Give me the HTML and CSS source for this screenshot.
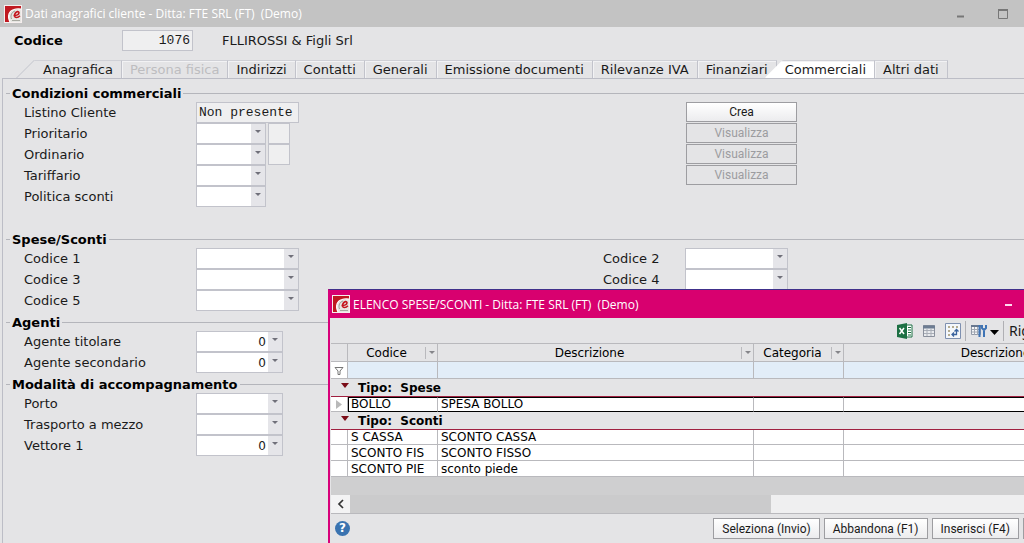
FILE: index.html
```html
<!DOCTYPE html>
<html lang="it">
<head>
<meta charset="utf-8">
<title>Dati anagrafici cliente</title>
<link rel="stylesheet" href="styles.css">
</head>
<body>
<svg class="defs" aria-hidden="true">
  <symbol id="logo" viewBox="0 0 18 18">
    <rect width="18" height="18" fill="#f6eeee"/>
    <rect x="1" y="1" width="16" height="16" fill="#c01820"/>
    <path d="M17 4v13H6C3.500 12 5 7 9 5Q12 3.500 17 4z" fill="#e6e6e2"/>
    <path d="M6 17C3 11 5 6 10 4.500Q13 3.300 17 4" fill="none" stroke="#fff" stroke-width="1.200"/>
    <path d="M7.500 14C6 10 8 7 11 6" fill="none" stroke="#9c9c94"/>
    <path d="M9.500 10.500c3 .2 5.500-1 5.500-2.800 0-1.700-2.700-1.400-3.900.8-1.100 2-.6 4 1.200 4 1.500 0 2.700-.7 3.600-1.800" fill="none" stroke="#c4141c" stroke-width="1.600"/>
    <path d="M8 15.500h8" stroke="#a8a8a0"/>
  </symbol>
</svg>
<main class="window">
  <header class="titlebar">
    <svg class="logo"><use href="#logo"/></svg>
    <h1 class="title">Dati anagrafici cliente - Ditta: FTE SRL (FT)&nbsp; (Demo)</h1>
    <button class="winbtn" aria-label="Riduci a icona"><svg width="12" height="12"><path d="M2 8.500h7" stroke="#777" stroke-width="2"/></svg></button>
    <button class="winbtn" aria-label="Ingrandisci"><svg width="12" height="12"><path d="M1.500 1.500h9v9h-9z" fill="none" stroke="#777"/><path d="M1 2h10" stroke="#777" stroke-width="2"/></svg></button>
  </header>
  <div class="record">
    <label class="record-label" for="codice">Codice</label>
    <input class="field field-code" id="codice" value="1076" readonly>
    <span>FLLIROSSI &amp; Figli Srl</span>
  </div>
  <nav class="tabs" role="tablist">
    <button class="tab tab-first" role="tab">Anagrafica</button>
    <button class="tab" role="tab" disabled>Persona fisica</button>
    <button class="tab" role="tab">Indirizzi</button>
    <button class="tab" role="tab">Contatti</button>
    <button class="tab" role="tab">Generali</button>
    <button class="tab" role="tab">Emissione documenti</button>
    <button class="tab" role="tab">Rilevanze IVA</button>
    <button class="tab" role="tab">Finanziari</button>
    <button class="tab tab-active" role="tab" aria-selected="true">Commerciali</button>
    <button class="tab" role="tab">Altri dati</button>
  </nav>
  <div class="panel">
    <section class="group group-tall">
      <h2 class="legend">Condizioni commerciali</h2>
      <div class="row"><label for="listino">Listino Cliente</label><div class="cell"><input class="field field-wide" id="listino" value="Non presente" readonly></div><button class="btn btn-side">Crea</button></div>
      <div class="row"><label for="prio">Prioritario</label><div class="cell"><span class="combo combo-s"><select id="prio"><option></option></select></span><input class="field field-mini" aria-label="Descrizione prioritario" readonly></div><button class="btn btn-side" disabled>Visualizza</button></div>
      <div class="row"><label for="ordi">Ordinario</label><div class="cell"><span class="combo combo-s"><select id="ordi"><option></option></select></span><input class="field field-mini" aria-label="Descrizione ordinario" readonly></div><button class="btn btn-side" disabled>Visualizza</button></div>
      <div class="row"><label for="tari">Tariffario</label><div class="cell"><span class="combo combo-s"><select id="tari"><option></option></select></span></div><button class="btn btn-side" disabled>Visualizza</button></div>
      <div class="row"><label for="poli">Politica sconti</label><div class="cell"><span class="combo combo-s"><select id="poli"><option></option></select></span></div></div>
    </section>
    <section class="group">
      <h2 class="legend">Spese/Sconti</h2>
      <div class="row"><label for="c1">Codice 1</label><div class="cell"><span class="combo combo-l"><select id="c1"><option></option></select></span></div><div class="pair"><label for="c2">Codice 2</label><span class="combo combo-l"><select id="c2"><option></option></select></span></div></div>
      <div class="row"><label for="c3">Codice 3</label><div class="cell"><span class="combo combo-l"><select id="c3"><option></option></select></span></div><div class="pair"><label for="c4">Codice 4</label><span class="combo combo-l"><select id="c4"><option></option></select></span></div></div>
      <div class="row"><label for="c5">Codice 5</label><div class="cell"><span class="combo combo-l"><select id="c5"><option></option></select></span></div></div>
    </section>
    <section class="group">
      <h2 class="legend">Agenti</h2>
      <div class="row"><label for="a1">Agente titolare</label><div class="cell"><span class="combo combo-m"><select id="a1"><option>0</option></select></span></div></div>
      <div class="row"><label for="a2">Agente secondario</label><div class="cell"><span class="combo combo-m"><select id="a2"><option>0</option></select></span></div></div>
    </section>
    <section class="group">
      <h2 class="legend">Modalità di accompagnamento</h2>
      <div class="row"><label for="m1">Porto</label><div class="cell"><span class="combo combo-m"><select id="m1"><option></option></select></span></div></div>
      <div class="row"><label for="m2">Trasporto a mezzo</label><div class="cell"><span class="combo combo-m"><select id="m2"><option></option></select></span></div></div>
      <div class="row"><label for="m3">Vettore 1</label><div class="cell"><span class="combo combo-m"><select id="m3"><option>0</option></select></span></div></div>
    </section>
  </div>
</main>

<section class="dialog" role="dialog" aria-labelledby="dlg-title">
  <header class="dialog-bar">
    <svg class="logo"><use href="#logo"/></svg>
    <h2 class="title" id="dlg-title">ELENCO SPESE/SCONTI - Ditta: FTE SRL (FT)&nbsp; (Demo)</h2>
    <button class="winbtn" aria-label="Riduci a icona"><svg width="12" height="12"><path d="M2 7h7" stroke="#ffd9ee" stroke-width="2"/></svg></button>
  </header>
  <div class="dialog-body">
    <div class="toolbar">
      <button class="tool" aria-label="Esporta in Excel"><svg width="16" height="16"><path d="M8 2h7v12H8z" fill="#fff" stroke="#1d7044"/><path d="M11 4.500h3M11 7h3M11 9.500h3M11 12h3" stroke="#1d7044"/><path d="M0 2l10-2v16L0 14z" fill="#1d7044"/><path d="M2.500 5l4.500 6M7 5l-4.500 6" stroke="#fff" stroke-width="1.500"/></svg></button>
      <button class="tool" aria-label="Griglia"><svg width="16" height="16"><path d="M2.500 2.500h11v11h-11z" fill="#e9ebee" stroke="#8a909c"/><path d="M2 4h12" stroke="#6d7c92" stroke-width="3"/><path d="M3 7.500h10M3 10.500h10M6 6v7M10 6v7" stroke="#a9aeb7"/></svg></button>
      <button class="tool" aria-label="Pivot"><svg width="16" height="16"><path d="M.5.500h15v15H.5z" fill="#f4f7fb" stroke="#7e90b0"/><path d="M3 3h2v2H3zM7 3h2v2H7zM11 3h2v2h-2zM3 7h2v2H3zM3 11h2v2H3z" fill="#b5ad92"/><path d="M7 11.500h4.500V6.500M9 9.500l-2 2 2 2M9.500 8.500l2-2 2 2" fill="none" stroke="#39639f" stroke-width="1.300"/></svg></button>
      <span class="sep"></span>
      <button class="tool tool-menu" aria-label="Personalizza"><svg width="28" height="16"><path d="M.5 2.500h9v9h-9z" fill="#f4f5f7" stroke="#929aa8"/><path d="M0 3h10" stroke="#68788f" stroke-width="2"/><path d="M1 6.500h8M1 9h8M3.500 4v8M6.500 4v8" stroke="#a2a8b2"/><path d="M8.500 2v12M11 2v3l2 2 2-2V2M13 7v7" fill="none" stroke="#3f74b5" stroke-width="2"/><path d="M19 7h9l-4.500 5z" fill="#000"/></svg></button>
      <span class="sep"></span>
      <span class="tool-text">Rig</span>
    </div>
    <div class="grid">
      <table class="table">
        <colgroup><col class="c-mark"><col class="c-short"><col class="c-long"><col class="c-short"><col class="c-long"></colgroup>
        <thead>
          <tr class="head"><th></th><th><span class="th">Codice</span></th><th><span class="th">Descrizione</span></th><th><span class="th">Categoria</span></th><th><span class="th">Descrizione</span></th></tr>
          <tr class="filter"><td><svg width="10" height="9"><path d="M1 1.500h8L6 5v3.500H4V5z" fill="#fff" stroke="#777"/></svg></td><td></td><td></td><td></td><td></td></tr>
        </thead>
        <tbody>
          <tr class="section"><th colspan="5"><span class="tri"></span>Tipo:&nbsp; Spese</th></tr>
          <tr class="item current"><td><svg width="6" height="9"><path d="M0 0l6 4.500L0 9z" fill="#b9b9b9"/></svg></td><td>BOLLO</td><td>SPESA BOLLO</td><td></td><td></td></tr>
          <tr class="section"><th colspan="5"><span class="tri"></span>Tipo:&nbsp; Sconti</th></tr>
          <tr class="item"><td></td><td>S CASSA</td><td>SCONTO CASSA</td><td></td><td></td></tr>
          <tr class="item"><td></td><td>SCONTO FIS</td><td>SCONTO FISSO</td><td></td><td></td></tr>
          <tr class="item"><td></td><td>SCONTO PIE</td><td>sconto piede</td><td></td><td></td></tr>
        </tbody>
      </table>
    </div>
    <div class="scroll">
      <button class="scroll-btn" aria-label="Scorri a sinistra"><svg width="8" height="10"><path d="M6 1L2 5l4 4" fill="none" stroke="#333" stroke-width="1.700"/></svg></button>
      <span class="thumb"></span>
    </div>
    <footer class="foot">
      <button class="help" aria-label="Aiuto">?</button>
      <div class="actions">
        <button class="btn">Seleziona (Invio)</button>
        <button class="btn">Abbandona (F1)</button>
        <button class="btn">Inserisci (F4)</button>
      </div>
    </footer>
  </div>
</section>
</body>
</html>
```
FILE: styles.css
```css
* { box-sizing: border-box; }

body {
  margin: 0;
  height: 100vh;
  overflow: hidden;
  background: #e4e4e6;
  color: #1a1a1a;
  font-family: "DejaVu Sans", Verdana, sans-serif;
  font-size: 13px;
}

button, input, select { font: inherit; color: inherit; margin: 0; border-radius: 0; }
h1, h2 { margin: 0; }
.defs { position: absolute; width: 0; height: 0; }

.window { display: flex; flex-direction: column; min-height: 100vh; }

.titlebar {
  display: flex;
  align-items: center;
  height: 27px;
  padding: 0 15px 0 4px;
  background: #c3c3c3;
}
.logo { width: 18px; height: 18px; flex: none; }
.title {
  flex: 1;
  margin-left: 3px;
  color: #fff;
  font: 400 12px "Open Sans", "Noto Sans", sans-serif;
  white-space: nowrap;
}
.winbtn { width: 12px; height: 12px; padding: 0; border: 0; background: none; display: flex; }
.winbtn + .winbtn { margin-left: 30px; }

.record { display: flex; align-items: center; height: 33px; padding: 0 14px 6px; }
.record-label { width: 108px; font-weight: 700; color: #000; }
.field {
  height: 21px;
  padding: 0 2px;
  border: 1px solid #c2c3cb;
  background: #efeff0;
  font-family: "Liberation Mono", monospace;
}
.field-code { width: 71px; margin-right: 29px; text-align: right; }
.field-wide { width: 103px; }
.field-mini { width: 22px; margin-left: 2px; }

.tabs { display: flex; height: 18px; padding-left: 35px; }
.tab {
  height: 18px;
  padding: 0 8px;
  border: 0;
  border-top: 1px solid #cfd0d6;
  border-right: 1px solid #c2c3cb;
  box-shadow: inset 1px 1px #f2f2f4;
  background: none;
  line-height: 17px;
  white-space: nowrap;
}
.tab:disabled { color: #bdbdc0; }
.tab-first { position: relative; box-shadow: none; }
.tab-first::before {
  content: "";
  position: absolute;
  right: 100%;
  top: -1px;
  width: 9px;
  height: 18px;
  border-left: 1px solid #c2c3cb;
  transform: skewX(-45deg);
}
.tab-active {
  position: relative;
  margin-left: -12px;
  padding-left: 20px;
  background: #fff;
  clip-path: polygon(0 100%, 18px 0, 100% 0, 100% 100%);
}

.panel {
  flex: 1;
  margin-left: 2px;
  padding: 5px 0 0 3px;
  border: solid #bcbdc6;
  border-width: 1px 0 0 1px;
}
.group { margin-bottom: 2px; }
.group-tall { margin-bottom: 23px; }
.legend {
  display: flex;
  align-items: center;
  gap: 2px;
  height: 18px;
  color: #000;
  font-size: 13px;
  font-weight: 700;
  white-space: nowrap;
}
.legend::before, .legend::after { content: ""; width: 4px; height: 1px; background: #b4b5bb; }
.legend::after { flex: 1; }

.row {
  display: grid;
  grid-template-columns: 172px 1fr 421px;
  align-items: center;
  height: 21px;
  padding-left: 18px;
}
.cell { display: flex; }
.pair { display: grid; grid-template-columns: 82px auto; justify-content: start; align-items: center; }

.combo { position: relative; display: block; height: 21px; }
.combo-s { width: 70px; }
.combo-m { width: 87px; }
.combo-l { width: 103px; }
.combo select {
  appearance: none;
  display: block;
  width: 100%;
  height: 21px;
  padding: 0 16px 0 2px;
  border: 1px solid #c2c3cb;
  background: linear-gradient(90deg, #fff calc(100% - 14px), #e5e5e9 0);
  font-size: 12px;
  text-align-last: right;
}
.combo::after {
  content: "";
  position: absolute;
  right: 5px;
  top: 7px;
  border: solid transparent;
  border-width: 3px 3px 0;
  border-top-color: #70707a;
}

.btn {
  height: 21px;
  padding: 0 8px;
  border: 1px solid #9d9da1;
  background: linear-gradient(#fff, #ececee);
  font-family: Roboto, "Liberation Sans", sans-serif;
  font-size: 12px;
  white-space: nowrap;
}
.btn:disabled { background: none; color: #9c9ca0; }
.btn-side { align-self: start; width: 111px; height: 20px; margin-left: 83px; }

.dialog {
  position: absolute;
  left: 328px;
  top: 289px;
  right: 0;
  bottom: 0;
  display: flex;
  flex-direction: column;
  overflow: hidden;
  border-left: 2px solid #d8007a;
  border-top: 1px solid #40308a;
  background: #e4e4e6;
}
.dialog-bar {
  display: flex;
  align-items: center;
  height: 28px;
  flex: none;
  padding: 0 9px 0 2px;
  background: #d8006f;
}
.dialog-body { flex: 1; display: flex; flex-direction: column; padding-left: 1px; }

.toolbar { display: flex; justify-content: flex-end; align-items: center; height: 25px; flex: none; }
.tool { padding: 0; border: 0; background: none; display: flex; margin-right: 8px; }
.tool + .sep { margin-left: -4px; }
.tool-menu { margin-right: 8px; }
.sep { width: 1px; height: 20px; margin-right: 5px; background: #b0b0b4; }
.tool-text { width: 15px; overflow: hidden; white-space: nowrap; font: 14px "Noto Sans", sans-serif; }

.grid { flex: 1; overflow: hidden; background: #cfcfd0; }
.table { width: 829px; table-layout: fixed; border-collapse: separate; border-spacing: 0; font-size: 12px; color: #000; }
.c-mark { width: 17px; }
.c-short { width: 90px; }
.c-long { width: 316px; }
.table th, .table td { padding: 0; border: solid #b9b9bd; border-width: 0 1px 1px 0; white-space: nowrap; overflow: hidden; }
.head th { height: 19px; border-top-width: 1px; background: #e4e4e6; font-weight: 400; line-height: 16px; }
.th { display: block; position: relative; padding-right: 12px; text-align: center; }
.th::before {
  content: "";
  position: absolute;
  top: 2px;
  right: 11px;
  width: 1px;
  height: 12px;
  background: #b9b9bd;
}
.th::after {
  content: "";
  position: absolute;
  top: 6px;
  right: 2px;
  border: solid transparent;
  border-width: 3px 3px 0;
  border-top-color: #85858a;
}
.filter td { height: 17px; background: #e2edf8; }
.filter td:first-child { background: #fff; }
.table td svg { display: block; margin: 0 auto; }
.table .section th { height: 18px; border-width: 0 0 1px; border-color: #a02040; background: #e4e4e6; text-align: left; line-height: 16px; }
.tri { display: inline-block; margin: 0 9px 4px 10px; border: solid transparent; border-width: 5px 4px 0; border-top-color: #7a0c18; }
.item td { height: 15px; padding-left: 3px; background: #fff; line-height: 14px; }
.item td:first-child { padding: 0; }
.item + .item td { height: 16px; }
.current td + td { border-top: 1px solid #000; border-bottom-color: #000; line-height: 13px; }
.current td:nth-child(2) { border-left: 1px solid #000; padding-left: 2px; }

.scroll { display: flex; height: 18px; flex: none; background: #efeff0; }
.scroll-btn { display: flex; align-items: center; justify-content: center; width: 19px; padding: 0; border: 0; background: #f3f3f4; }
.thumb { width: 421px; background: #cbcbcc; }

.foot { display: flex; align-items: center; justify-content: space-between; height: 30px; flex: none; padding: 0 0 0 4px; border-top: 1px solid #b9b9bd; }
.help { width: 15px; height: 15px; padding: 0; border: 0; border-radius: 50%; background: #3a73b0; color: #fff; font-weight: 700; font-size: 12px; line-height: 15px; }
.actions { display: flex; gap: 4px; padding-right: 4px; border-right: 1px solid #9d9da1; }
```
